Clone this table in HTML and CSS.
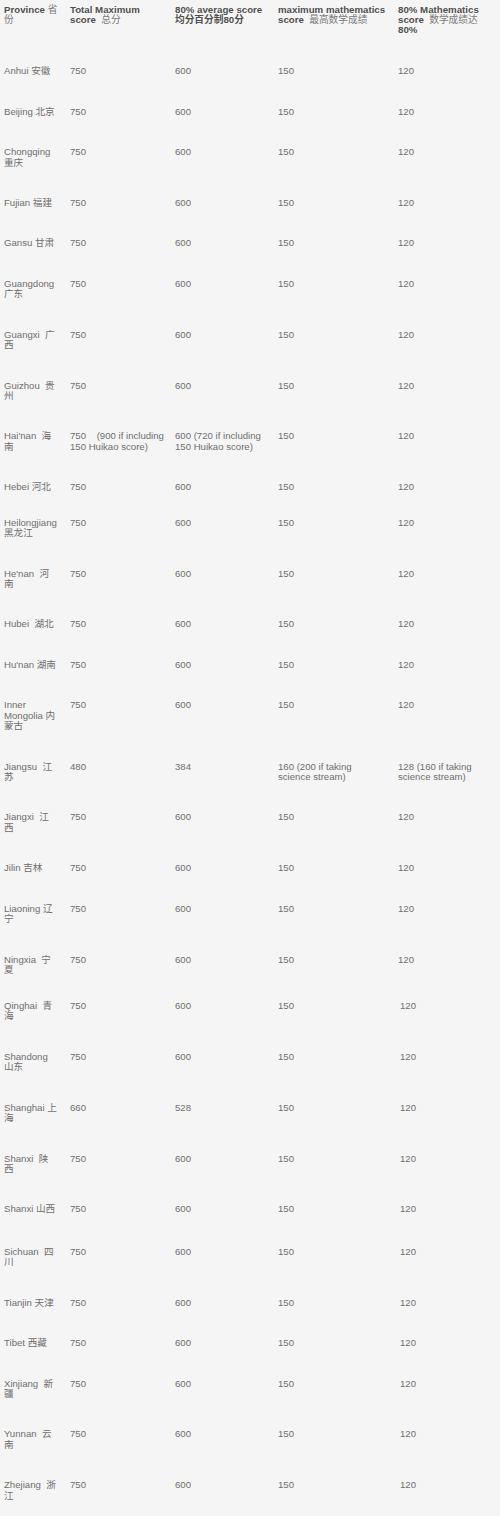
FILE: index.html
```html
<!DOCTYPE html>
<html lang="en">
<head>
<meta charset="utf-8">
<title>Gaokao scores by province</title>
<link rel="stylesheet" href="styles.css">
</head>
<body>
<table class="scores">
  <colgroup>
    <col class="c-prov">
    <col class="c-total">
    <col class="c-avg">
    <col class="c-math">
    <col class="c-math80">
  </colgroup>
  <thead>
    <tr>
      <th>Province <span class="thin">省</span><br><span class="thin">份</span></th>
      <th>Total Maximum<br>score&nbsp; <span class="thin">总分</span></th>
      <th>80% average score<br>均分百分制80分</th>
      <th>maximum mathematics<br>score&nbsp; <span class="thin">最高数学成绩</span></th>
      <th>80% Mathematics<br>score&nbsp; <span class="thin">数学成绩达</span><br>80%</th>
    </tr>
  </thead>
  <tbody>
    <tr><td>Anhui 安徽</td><td>750</td><td>600</td><td>150</td><td>120</td></tr>
    <tr><td>Beijing 北京</td><td>750</td><td>600</td><td>150</td><td>120</td></tr>
    <tr><td>Chongqing<br>重庆</td><td>750</td><td>600</td><td>150</td><td>120</td></tr>
    <tr><td>Fujian 福建</td><td>750</td><td>600</td><td>150</td><td>120</td></tr>
    <tr><td>Gansu 甘肃</td><td>750</td><td>600</td><td>150</td><td>120</td></tr>
    <tr><td>Guangdong<br>广东</td><td>750</td><td>600</td><td>150</td><td>120</td></tr>
    <tr><td>Guangxi&nbsp; 广<br>西</td><td>750</td><td>600</td><td>150</td><td>120</td></tr>
    <tr><td>Guizhou&nbsp; 贵<br>州</td><td>750</td><td>600</td><td>150</td><td>120</td></tr>
    <tr><td>Hai'nan&nbsp; 海<br>南</td><td>750&nbsp;&nbsp;&nbsp; (900 if including<br>150 Huikao score)</td><td>600 (720 if including<br>150 Huikao score)</td><td>150</td><td>120</td></tr>
    <tr class="row-short"><td>Hebei 河北</td><td>750</td><td>600</td><td>150</td><td>120</td></tr>
    <tr><td>Heilongjiang<br>黑龙江</td><td>750</td><td>600</td><td>150</td><td>120</td></tr>
    <tr><td>He'nan&nbsp; 河<br>南</td><td>750</td><td>600</td><td>150</td><td>120</td></tr>
    <tr><td>Hubei&nbsp; 湖北</td><td>750</td><td>600</td><td>150</td><td>120</td></tr>
    <tr><td>Hu'nan 湖南</td><td>750</td><td>600</td><td>150</td><td>120</td></tr>
    <tr><td>Inner<br>Mongolia 内<br>蒙古</td><td>750</td><td>600</td><td>150</td><td>120</td></tr>
    <tr><td>Jiangsu&nbsp; 江<br>苏</td><td>480</td><td>384</td><td>160 (200 if taking<br>science stream)</td><td>128 (160 if taking<br>science stream)</td></tr>
    <tr><td>Jiangxi&nbsp; 江<br>西</td><td>750</td><td>600</td><td>150</td><td>120</td></tr>
    <tr><td>Jilin 吉林</td><td>750</td><td>600</td><td>150</td><td>120</td></tr>
    <tr><td>Liaoning 辽<br>宁</td><td>750</td><td>600</td><td>150</td><td>120</td></tr>
    <tr class="row-snug"><td>Ningxia&nbsp; 宁<br>夏</td><td>750</td><td>600</td><td>150</td><td>120</td></tr>
    <tr class="shifted"><td>Qinghai&nbsp; 青<br>海</td><td>750</td><td>600</td><td>150</td><td>120</td></tr>
    <tr class="shifted"><td>Shandong<br>山东</td><td>750</td><td>600</td><td>150</td><td>120</td></tr>
    <tr class="shifted"><td>Shanghai 上<br>海</td><td>660</td><td>528</td><td>150</td><td>120</td></tr>
    <tr class="shifted"><td>Shanxi&nbsp; 陕<br>西</td><td>750</td><td>600</td><td>150</td><td>120</td></tr>
    <tr class="shifted row-loose"><td>Shanxi 山西</td><td>750</td><td>600</td><td>150</td><td>120</td></tr>
    <tr class="shifted"><td>Sichuan&nbsp; 四<br>川</td><td>750</td><td>600</td><td>150</td><td>120</td></tr>
    <tr class="shifted"><td>Tianjin 天津</td><td>750</td><td>600</td><td>150</td><td>120</td></tr>
    <tr class="shifted"><td>Tibet 西藏</td><td>750</td><td>600</td><td>150</td><td>120</td></tr>
    <tr class="shifted"><td>Xinjiang&nbsp; 新<br>疆</td><td>750</td><td>600</td><td>150</td><td>120</td></tr>
    <tr class="shifted"><td>Yunnan&nbsp; 云<br>南</td><td>750</td><td>600</td><td>150</td><td>120</td></tr>
    <tr class="shifted"><td>Zhejiang&nbsp; 浙<br>江</td><td>750</td><td>600</td><td>150</td><td>120</td></tr>
  </tbody>
</table>
</body>
</html>
```

FILE: styles.css
```css
html {
  background: #f5f5f5;
}

body {
  margin: 0;
  background: #f5f5f5;
  font-family: "Liberation Sans", "Noto Sans CJK SC", sans-serif;
  font-size: 9.6px;
  line-height: 10.4px;
  color: #6f6f6f;
}

.scores {
  width: 500px;
  border-collapse: collapse;
  table-layout: fixed;
}

.c-prov { width: 66px; }
.c-total { width: 105px; }
.c-avg { width: 103px; }
.c-math { width: 120px; }
.c-math80 { width: 106px; }

.scores th,
.scores td {
  text-align: left;
  vertical-align: top;
  white-space: nowrap;
  padding: 15px 4px 15.05px 4px;
}

.scores th {
  font-weight: bold;
  font-size: 9.7px;
  color: #505050;
  padding-top: 4.5px;
  padding-bottom: 15.5px;
}

.scores th .thin {
  font-weight: normal;
  color: #7a7a7a;
}

.row-short td {
  padding-bottom: 10px;
}

.row-snug td {
  padding-bottom: 10.5px;
}

.row-loose td {
  padding-bottom: 17px;
}

.shifted td:last-child {
  padding-left: 6px;
}
```
